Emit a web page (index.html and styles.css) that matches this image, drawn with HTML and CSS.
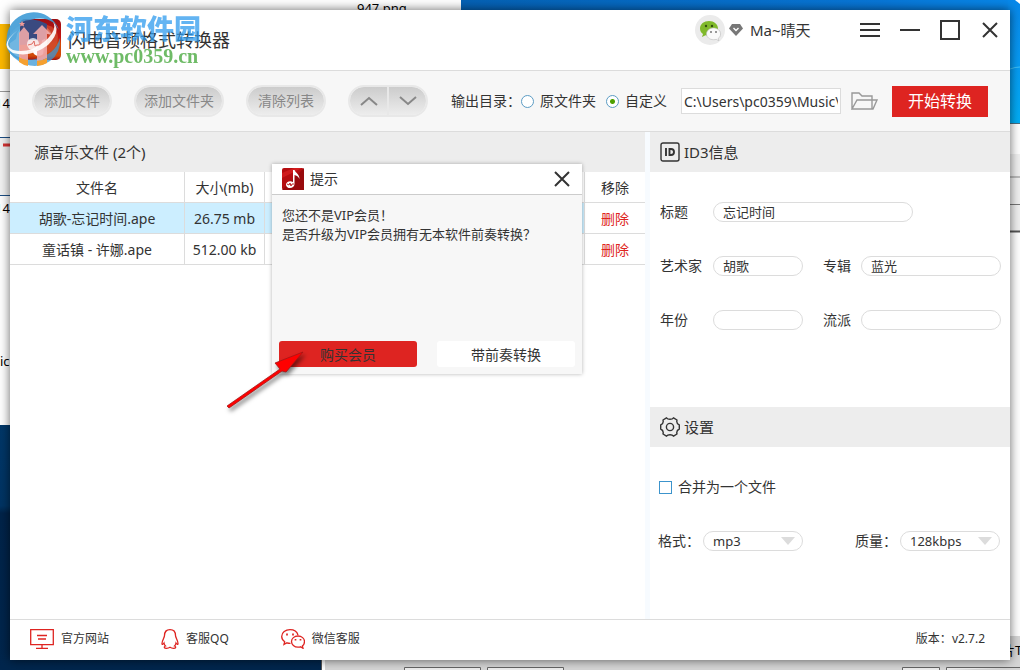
FILE: index.html
```html
<!DOCTYPE html>
<html lang="zh-CN">
<head>
<meta charset="utf-8">
<title>闪电音频格式转换器</title>
<link rel="stylesheet" href="styles.css">
</head>
<body>
<svg class="desktop" viewBox="0 0 1020 670" preserveAspectRatio="none" aria-hidden="true">
  <defs>
    <linearGradient id="sky" x1="0" x2="1"><stop offset="0" stop-color="#0561b4"/><stop offset=".75" stop-color="#0877d8"/><stop offset="1" stop-color="#0888ea"/></linearGradient>
    <linearGradient id="side" x1="0" x2="0" y1="0" y2="1"><stop offset="0" stop-color="#0888ea"/><stop offset=".5" stop-color="#079af3"/><stop offset="1" stop-color="#02aef5"/></linearGradient>
    <linearGradient id="night" x1="0" x2="0" y1="0" y2="1"><stop offset="0" stop-color="#003768"/><stop offset=".33" stop-color="#003463"/><stop offset=".36" stop-color="#002349"/><stop offset="1" stop-color="#00264d"/></linearGradient>
  </defs>
  <rect width="1020" height="670" fill="#fff"/>
  <rect x="461" width="559" height="12" fill="url(#sky)"/>
  <rect x="1008" width="12" height="123" fill="url(#side)"/>
  <path d="M1010 69q5-2 10-2" stroke="#41c2fa" fill="none"/>
  <path d="M1015 0h5v4z" fill="#fff"/>
  <path d="M1008 123.500h12" stroke="#4b6e80"/>
  <rect y="24" width="12" height="45" fill="#fdb900"/>
  <path d="M0 91.500h12" stroke="#999"/>
  <rect y="137" width="12" height="59" fill="#f2f2f2"/>
  <path d="M0 137.500h12M0 195.500h12" stroke="#1c4e84"/>
  <path d="M3 145h8" stroke="#d83434" stroke-width="3"/>
  <rect x="1008" y="154" width="12" height="78" fill="#f0f0f0"/>
  <path d="M1008 177h12" stroke="#bbb" stroke-width="2"/>
  <path d="M1008 204.500h12" stroke="#777"/>
  <path d="M1008 231.500h12" stroke="#555" stroke-width="2"/>
  <rect y="425" width="321" height="245" fill="url(#night)"/>
  <path d="M321.500 655v15" stroke="#555"/>
  <rect x="325" y="655" width="695" height="15" fill="#d6d6d6"/>
  <rect x="1008" y="636" width="12" height="34" fill="#d6d6d6"/>
  <path d="M404.500 670v-2.500h76v2.500M487.500 670v-2.500h76v2.500M902.500 670v-2.500h37v2.500M946.500 670v-2.500h74" fill="#eee" stroke="#666"/>
  <text x="357" y="13" class="desk-text">947.png</text>
  <text x="-5" y="108" class="desk-text"><tspan fill="#0078d7">1</tspan>4</text>
  <text x="-5" y="213" class="desk-text"><tspan fill="#0078d7">1</tspan>4</text>
  <text x="0" y="366" class="desk-text">ic</text>
  <text x="1002" y="655" class="desk-text">片T</text>
</svg>

<main class="window">
  <header class="titlebar">
    <svg class="app-logo" viewBox="0 0 42 42" aria-hidden="true">
      <defs><linearGradient id="logoRed" x1="0" y1="0" x2="0" y2="1"><stop offset="0" stop-color="#9c0f12"/><stop offset=".45" stop-color="#c41512"/><stop offset=".6" stop-color="#d54a08"/><stop offset=".9" stop-color="#d04808"/><stop offset="1" stop-color="#a01010"/></linearGradient></defs>
      <rect width="41" height="41" rx="5" fill="url(#logoRed)"/>
      <path d="M21 4h3c2 6 9 7 9 17-2-5-5-6-8-7v17c0 7-12 8-12 1 0-5 5-7 9-5z" fill="#fff"/>
    </svg>
    <h1 class="app-name">闪电音频格式转换器</h1>
    <div class="user">
      <svg class="avatar" viewBox="0 0 30 30" aria-hidden="true">
        <circle cx="15" cy="15" r="15" fill="#ebebeb"/>
        <path d="M14 6C9 6 5 9 5 13.500c0 2.500 1.200 4.200 3 5.500l-1 3 3.500-1.700c1 .4 2.200.5 3.500.5 5 0 9-3.200 9-7.300S19 6 14 6z" fill="#80b92b"/>
        <circle cx="11" cy="11" r="1.200" fill="#35500f"/><circle cx="17" cy="11" r="1.200" fill="#35500f"/>
        <path d="M18.500 13c-4 0-7 2.700-7 5.900s3 5.800 7 5.800c1 0 1.900-.1 2.700-.4l2.800 1.500-.8-2.400c1.500-1 2.400-2.600 2.400-4.500 0-3.200-3.100-5.900-7.100-5.900z" fill="#fafafa" stroke="#bbb" stroke-width=".6"/>
        <circle cx="16" cy="17" r="1" fill="#777"/><circle cx="21" cy="17" r="1" fill="#777"/>
      </svg>
      <svg class="gem" viewBox="0 0 14 12" aria-hidden="true"><path d="M3 0h8l3 4.500L7 12 0 4.500z" fill="#777"/><path d="m4.500 4 2.500 2.500L9.500 4" fill="none" stroke="#fff" stroke-width="1.400"/></svg>
      <span class="user-name">Ma~晴天</span>
    </div>
    <nav class="window-controls">
      <button type="button" aria-label="菜单"><svg viewBox="0 0 20 20"><path d="M0 4h20M0 10h20M0 16h20"/></svg></button>
      <button type="button" aria-label="最小化"><svg viewBox="0 0 20 20"><path d="M0 10h20"/></svg></button>
      <button type="button" aria-label="最大化"><svg viewBox="0 0 20 20"><path d="M1 1h18v18H1z"/></svg></button>
      <button type="button" aria-label="关闭"><svg viewBox="0 0 20 20"><path d="m3 3 14 14M17 3 3 17"/></svg></button>
    </nav>
  </header>

  <section class="toolbar">
    <button type="button" class="pill">添加文件</button>
    <button type="button" class="pill pill-wide">添加文件夹</button>
    <button type="button" class="pill">清除列表</button>
    <div class="move-group">
      <button type="button" aria-label="上移"><svg viewBox="0 0 18 10"><path d="m1 9 8-7 8 7"/></svg></button>
      <button type="button" aria-label="下移"><svg viewBox="0 0 18 10"><path d="m1 1 8 7 8-7"/></svg></button>
    </div>
    <div class="output">
      <span>输出目录<span class="punct">：</span></span>
      <label class="choice choice-first"><input type="radio" name="out">原文件夹</label>
      <label class="choice"><input type="radio" name="out" checked>自定义</label>
    </div>
    <input class="path" type="text" aria-label="输出路径" value="C:\Users\pc0359\Music\">
    <button type="button" class="browse" aria-label="浏览"><svg viewBox="0 0 28 20"><path d="M1 18V2h7l3 3h10v4M1 18 6 9h20l-4 9zM21 9v9" /></svg></button>
    <button type="button" class="start">开始转换</button>
  </section>

  <div class="content">
    <section class="files">
      <h2 class="section-title files-title">源音乐文件 (2个)</h2>
      <table class="file-table">
        <colgroup><col class="col-name"><col class="col-size"><col><col class="col-remove"></colgroup>
        <thead><tr><th>文件名</th><th>大小(mb)</th><th></th><th>移除</th></tr></thead>
        <tbody>
          <tr class="selected"><td>胡歌-忘记时间.ape</td><td>26.75 mb</td><td></td><td><a href="#">删除</a></td></tr>
          <tr><td>童话镇 - 许娜.ape</td><td>512.00 kb</td><td></td><td><a href="#">删除</a></td></tr>
        </tbody>
      </table>

      <div class="dialog" role="dialog" aria-labelledby="dialog-title">
        <header class="dialog-header">
          <svg class="dialog-logo" viewBox="0 0 22 22" aria-hidden="true">
            <rect width="22" height="22" rx="2" fill="#b50d10"/><path d="M0 22 22 0v22z" fill="#980a0d"/><path d="M0 5 12 0h8L0 10z" fill="#d01b1d"/>
            <path d="M11 2h1.500c1 3 5 4 5 9-1-2.500-3-3.500-5-4v9c0 5-8 5.500-8.500 1-.2-3 4-5 7-3z" fill="#fff"/>
            <path d="m5 16 2 1 1-2 1 3 1-2h2" fill="none" stroke="#b50d10" stroke-width=".9"/>
          </svg>
          <h2 id="dialog-title">提示</h2>
          <button type="button" aria-label="关闭"><svg viewBox="0 0 16 16"><path d="m1 1 14 14M15 1 1 15"/></svg></button>
        </header>
        <p class="dialog-text">您还不是VIP会员<span class="punct">！</span><br>是否升级为VIP会员拥有无本软件前奏转换<span class="punct">？</span></p>
        <div class="dialog-actions">
          <button type="button" class="buy">购买会员</button>
          <button type="button">带前奏转换</button>
        </div>
      </div>

      <svg class="pointer" viewBox="0 0 82 62" aria-hidden="true">
        <path d="M2 57 55 20l-5-6 28-11-17 20-4-1L4 59z" fill="#f00" stroke="#a31515" stroke-width=".8" stroke-linejoin="round"/>
      </svg>
    </section>

    <aside class="details">
      <h2 class="section-title">
        <svg class="title-icon" viewBox="0 0 20 20" aria-hidden="true"><rect x="1" y="1" width="18" height="18" rx="2" fill="none" stroke="#333" stroke-width="1.400"/><path d="M6 6v8M9.500 7v6h1.500a3 3 0 0 0 0-6z" fill="none" stroke="#333" stroke-width="1.900"/></svg>
        ID3信息
      </h2>
      <form class="tags">
        <label for="title">标题</label><input class="tag-title" id="title" type="text" value="忘记时间">
        <label for="artist">艺术家</label><input class="tag-short" id="artist" type="text" value="胡歌">
        <label for="album">专辑</label><input id="album" type="text" value="蓝光">
        <label for="year">年份</label><input class="tag-short" id="year" type="text">
        <label for="genre">流派</label><input id="genre" type="text">
      </form>
      <h2 class="section-title">
        <svg class="title-icon" viewBox="0 0 20 20" aria-hidden="true" fill="none" stroke="#333" stroke-width="1.400"><circle cx="10" cy="10" r="3.600"/><path d="M6.500.800Q7.500 2.300 10 2.300T13.500.800L17 3Q16 6.500 19.300 8v4Q16 13.500 17 17l-3.500 2.200Q12.500 17.700 10 17.700T6.500 19.200L3 17Q4 13.500.700 12V8Q4 6.500 3 3z" stroke-linejoin="round"/></svg>
        设置
      </h2>
      <form class="settings">
        <label class="merge"><input type="checkbox">合并为一个文件</label>
        <div class="selects">
          <div class="field"><label for="format">格式：</label><span class="select"><select id="format"><option>mp3</option></select></span></div>
          <div class="field"><label for="quality">质量：</label><span class="select"><select id="quality"><option>128kbps</option></select></span></div>
        </div>
      </form>
    </aside>
  </div>

  <footer class="footer">
    <a href="#" class="link-site"><svg viewBox="0 0 24 20"><path d="M.7.700h22.600v15H.700zM7 6.500h10M8 10h8M12 16v3M6 19.300h12"/></svg>官方网站</a>
    <a href="#" class="link-qq"><svg viewBox="0 0 18 20"><path d="M9 .7C5.500.700 3.500 3 3.500 6.500c0 2-2.500 5-2.500 8 0 1.500 1 1 2-.5.200 1.300.7 2.300 1.500 3-2 .8-1.500 2.300 1 2.300 1.500 0 2.500-.3 3.500-1 1 .7 2 1 3.500 1 2.500 0 3-1.500 1-2.300.8-.7 1.300-1.700 1.500-3 1 1.500 2 2 2 .5 0-3-2.500-6-2.500-8C14.500 3 12.500.7 9 .7z"/></svg>客服QQ</a>
    <a href="#" class="link-wechat"><svg viewBox="0 0 24 20"><path d="M17 6C16 2.500 12.500.700 9 .700 4.500.700.700 3.500.700 7.500c0 2.200 1.200 4 3 5.200L3 15.500l3-1.700q1.500.5 3.500.5"/><path d="M17 7c-3.700 0-6.500 2.500-6.500 5.500s2.800 5.700 6.500 5.700c.9 0 1.800-.1 2.500-.4l2.500 1.500-.6-2.300c1.300-1 2.100-2.600 2.100-4.500C23.500 9.500 20.700 7 17 7z"/><path d="M6 4.500v2M12 4.500v2M14.500 10v1.500M19.500 10v1.500" stroke-width="1.700"/></svg>微信客服</a>
    <span class="version">版本<span class="punct">：</span>v2.7.2</span>
  </footer>
</main>

<div class="watermark" aria-hidden="true">
  <svg class="mark" viewBox="0 0 60 58">
    <path d="M3 24A27 27 0 0 1 55 19L50 12Q40 5 27 9 14 14 12 28L2 35z" fill="#3f9bd6" opacity=".9"/>
    <path d="M3 37Q1 24 16 14v35Q6 45 3 37z" fill="#58a9dc" opacity=".85"/>
    <path d="M16 12Q28 5 43 13v14L30 33 16 34z" fill="#3a4a80"/>
    <path d="M43 14q10 2 11 12-1 15-15 17z" fill="#cf4a30" opacity=".8"/>
    <path d="M3 36q10 15 28 12 20-4 25-21 1 15-10 23-12 8-25 3Q7 48 3 36z" fill="#3b97d4" opacity=".75"/>
    <path d="M15 22l5-6 5 6v7h8v-6h-4l9-9 9 9h-4v24q-5 3-10 3V39q-5 3-9 0v11q-5 0-9-3z" fill="#f0a9a8" opacity=".9"/>
    <path d="M15 46q4 3 9 3v6q-5-1-9-4zM33 50q5 0 10-3v5q-5 3-10 3z" fill="#f5a030"/>
    <circle cx="29" cy="33" r="6" fill="#fff" opacity=".75"/>
    <path d="m24 34 4-1 2-3 1 5 2-1h4" fill="none" stroke="#e06a60"/>
    <path d="M14 19Q-3 33 9 39 25 43 40 31 54 19 49 11 58 20 44 34 27 47 9 42-6 34 14 19z" fill="#fff" opacity=".9"/>
    <path d="m18 10 1 2 2 0-1.500 1.500.5 2-2-1-2 1 .5-2L15 12h2z" fill="#f09a98"/>
  </svg>
  <div class="mark-text"><span class="mark-name">河东软件园</span><span class="mark-url">www.pc0359.cn</span></div>
</div>
</body>
</html>
```
FILE: styles.css
```css
* { box-sizing: border-box; }

body {
  margin: 0;
  min-height: 100vh;
  padding: 10px;
  display: flex;
  position: relative;
  color: #333;
  font: 14px/20px "Noto Sans", "Noto Sans CJK SC", sans-serif;
}

button, input, select { font: inherit; color: inherit; }
button { padding: 0; border: 0; background: none; cursor: pointer; }
h1, h2, p { margin: 0; font-weight: 400; }
a { color: inherit; text-decoration: none; }
svg { display: block; flex: none; }

/* Full-width punctuation centred in its cell */
.punct { font-family: "Noto Sans CJK TC", sans-serif; line-height: 1; }

.desktop { position: absolute; inset: 0; width: 100%; height: 100%; }
.desk-text { font: 13px "Noto Sans", "Noto Sans CJK SC", sans-serif; fill: #000; }

.window {
  position: relative;
  flex: 1;
  min-width: 0;
  display: flex;
  flex-direction: column;
  background: #fff;
  box-shadow: 0 0 10px rgba(0, 0, 0, .6);
}

/* Title bar */
.titlebar { display: flex; align-items: center; height: 61px; padding-left: 10px; border-bottom: 1px solid #dcdcdc; }
.app-logo { width: 42px; height: 42px; }
.app-name { margin-left: 6px; font-size: 18px; line-height: 24px; }
.user { display: flex; align-items: center; margin: 0 30px 20px auto; }
.avatar { width: 30px; height: 30px; }
.gem { width: 14px; height: 12px; margin: 0 7px 0 4px; }
.user-name { min-width: 70px; font-size: 15px; }
.window-controls { display: flex; margin-bottom: 20px; }
.window-controls button { width: 40px; height: 40px; display: grid; place-items: center; }
.window-controls svg { width: 20px; height: 20px; fill: none; stroke: #333; stroke-width: 2; }

/* Toolbar */
.toolbar { display: flex; align-items: center; height: 61px; padding: 0 22px; background: #f7f7f7; border-bottom: 1px solid #dcdcdc; }
.pill, .move-group { flex: none; width: 80px; height: 32px; margin-right: 22px; border: 2px solid #e8e8e8; border-radius: 16px; background: linear-gradient(#ccc, #ededed) padding-box; color: #888; }
.pill-wide { width: 90px; }
.move-group { display: flex; overflow: hidden; }
.move-group button { flex: 1; display: grid; place-items: center; }
.move-group button + button { border-left: 2px solid #e8e8e8; }
.move-group svg { width: 18px; height: 10px; fill: none; stroke: #888; stroke-width: 2; }
.output { flex: none; display: flex; align-items: center; padding-left: 1px; }
.choice { display: flex; align-items: center; gap: 6px; }
.choice-first { margin-right: 10px; }
.choice input { appearance: none; width: 13px; height: 13px; margin: 0; border: 1px solid #5c9cc4; border-radius: 50%; background: #fff; }
.choice input:checked { background: radial-gradient(circle, #4ea000 0 2px, #fff 3px); }
.path { flex: 1; min-width: 0; height: 26px; margin: 0 10px 0 14px; padding: 0 2px; border: 1px solid #dcdcdc; background: #fff; }
.browse svg { width: 28px; height: 20px; fill: none; stroke: #999; stroke-width: 1.4; }
.start { flex: none; width: 96px; height: 31px; margin-left: 13px; background: #de2421; color: #fff; font-size: 16px; }

/* Main area */
.content { flex: 1; display: flex; }
.files { position: relative; flex: 1; min-width: 0; border-right: 5px solid #f7fbff; }
.section-title { display: flex; align-items: center; gap: 4px; height: 40px; padding-left: 10px; background: #ededed; font-size: 15px; }
.files-title { padding-left: 24px; }
.title-icon { width: 20px; height: 20px; }

.file-table { width: 100%; table-layout: fixed; border-collapse: separate; border-spacing: 0; text-align: center; }
.col-name { width: 175px; }
.col-size { width: 80px; }
.col-remove { width: 60px; }
.file-table th, .file-table td { height: 31px; padding: 1px 0 0; border-bottom: 1px solid #dcdcdc; border-right: 1px solid #dcdcdc; font-weight: 400; white-space: nowrap; }
.file-table th:last-child, .file-table td:last-child { border-right: 0; }
.selected td { background: #cef; }
.selected td:last-child { background: #fff; }
.file-table a { color: #de2421; }

/* Upgrade dialog */
.dialog { position: absolute; left: 262px; top: 32px; width: 310px; height: 210px; display: flex; flex-direction: column; background: #f7f7f7; box-shadow: 0 0 4px rgba(0, 0, 0, .3); }
.dialog-header { display: flex; align-items: center; height: 31px; padding: 0 12px 0 10px; background: #fff; border-bottom: 1px solid #ccc; }
.dialog-logo { width: 22px; height: 22px; }
.dialog-header h2 { flex: 1; margin-left: 6px; font-size: 14px; }
.dialog-header button svg { width: 16px; height: 16px; fill: none; stroke: #333; stroke-width: 2; }
.dialog-text { padding: 11px 10px; font-size: 13px; line-height: 19px; }
.dialog-actions { display: flex; gap: 20px; margin-top: auto; padding: 7px; }
.dialog-actions button { flex: 1; height: 26px; padding-top: 1px; border-radius: 3px; background: #fff; }
.dialog-actions .buy { background: #de2421; }

.pointer { position: absolute; left: 215px; top: 217px; width: 82px; height: 62px; filter: drop-shadow(2px 3px 2px rgba(0, 0, 0, .5)); }

/* Details */
.details { flex: none; width: 360px; }
.tags { display: grid; grid-template-columns: 53px 110px 38px 1fr; row-gap: 34px; align-items: center; padding: 30px 9px 77px 10px; }
.tags input { width: 100%; min-width: 0; height: 20px; padding: 0 9px; border: 1px solid #dcdcdc; border-radius: 10px; background: #fff; font-size: 13px; }
.tags .tag-title { grid-column: 2 / -1; width: 200px; }
.tags .tag-short { width: 90px; }
.settings { padding: 30px 10px 0 8px; }
.merge { display: flex; align-items: center; gap: 6px; }
.merge input { appearance: none; width: 13px; height: 13px; margin: 0 0 0 1px; border: 1px solid #3c94cc; background: #fff; }
.selects { display: flex; justify-content: space-between; margin-top: 34px; }
.field { display: flex; }
.field label { width: 45px; }
.select { position: relative; width: 100px; }
.select select { appearance: none; display: block; width: 100%; height: 20px; padding: 0 9px; border: 1px solid #dcdcdc; border-radius: 10px; background: #fff; font-size: 13px; line-height: 18px; }
.select::after { content: ""; position: absolute; right: 8px; top: 6px; border: 7px solid transparent; border-top: 8px solid #dcdcdc; border-bottom: 0; pointer-events: none; }

/* Footer */
.footer { display: flex; align-items: center; height: 41px; padding: 0 25px 2px 20px; border-top: 1px solid #dcdcdc; font-size: 12px; }
.footer a { display: flex; align-items: center; gap: 7px; }
.footer svg { height: 20px; fill: none; stroke: #de2421; stroke-width: 1.3; }
.link-site svg, .link-wechat svg { width: 24px; }
.link-qq svg { width: 18px; }
.link-qq, .link-wechat { margin-left: 52px; }
.version { margin-left: auto; }

/* Site watermark */
.watermark { position: absolute; left: 4px; top: 11px; display: flex; pointer-events: none; }
.mark { width: 60px; height: 58px; }
.mark-text { display: flex; flex-direction: column; padding-left: 2px; opacity: .75; }
.mark-name { color: #2f9bee; font: 900 27px/34px "Noto Sans CJK SC", sans-serif; }
.mark-url { color: #3fa535; font: bold 20px/22px "Liberation Serif", serif; }
```
